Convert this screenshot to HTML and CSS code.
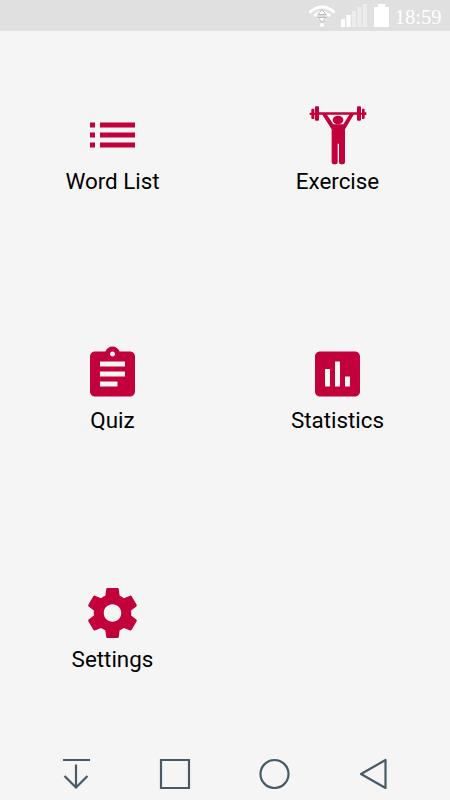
FILE: index.html
```html
<!DOCTYPE html>
<html lang="en">
<head>
<meta charset="utf-8">
<title>Vocabulary</title>
<link rel="stylesheet" href="styles.css">
</head>
<body>
<header class="status">
  <svg class="wifi" width="28" height="24" viewBox="0 0 28 24">
    <path d="M1.500 9.500Q14 -1.500 26.500 9.500M6 13Q14 5.500 22 13" fill="none" stroke="#fff" stroke-width="3"/>
    <path d="M10 16.500Q14 13.500 18 16.500" fill="none" stroke="#fff" stroke-width="2"/>
    <circle cx="14" cy="22" r="2" fill="#fff"/>
    <path d="M14 6.500l4 5h-8zM14 19.500l4-5h-8z" fill="#fff" stroke="#aaa" stroke-width=".8"/>
  </svg>
  <svg class="signal" width="26" height="24" viewBox="0 0 26 24">
    <path d="M0 16h4v8H0zM5.500 12h4v12h-4z" fill="#fff"/>
    <path d="M11 8h4v16h-4zM16.500 4h4v20h-4zM22 1h4v23h-4z" fill="#ececec"/>
  </svg>
  <svg class="battery" width="15" height="24" viewBox="0 0 15 24"><path d="M4 1h7v3h4v20H0V4h4z" fill="#fff"/></svg>
  <span class="clock">18:59</span>
</header>
<main class="menu">
  <a class="item">
    <svg class="icon" viewBox="0 0 24 24"><path d="M3 13h2v-2H3v2zm0 4h2v-2H3v2zm0-8h2V7H3v2zm4 4h14v-2H7v2zm0 4h14v-2H7v2zM7 7v2h14V7H7z"/></svg>
    <span>Word List</span>
  </a>
  <a class="item">
    <svg class="icon" viewBox="52.5 30 180 180">
      <path d="M59 53h5V44q0-3 3-3h6v12h2V37q0-3 3-3h6q3 0 3 3v15h114V37q0-3 3-3h6q3 0 3 3v16h3V41h5q3 0 3 3v8h5v8h-5v9q0 3-3 3h-5V59h-3v15q0 3-3 3h-6q-3 0-3-3V59h-10l-26 44v99q0 6-6 6h-6q-6 0-6-6v-56h-4v56q0 6-6 6h-6q-6 0-6-6v-99L97 59H87v15q0 3-3 3h-6q-3 0-3-3V59h-2v13h-6q-3 0-3-3v-9h-5zM111 59l19 29h30l18-29z"/>
      <ellipse cx="144" cy="75" rx="16" ry="12.500"/>
    </svg>
    <span>Exercise</span>
  </a>
  <a class="item">
    <svg class="icon" viewBox="0 0 24 24"><path d="M19 3h-4.180C14.400 1.840 13.300 1 12 1s-2.400.84-2.820 2H5c-1.100 0-2 .9-2 2v14c0 1.100.9 2 2 2h14c1.100 0 2-.9 2-2V5c0-1.100-.9-2-2-2zm-7 0c.55 0 1 .45 1 1s-.45 1-1 1-1-.45-1-1 .45-1 1-1zm2 14H7v-2h7v2zm3-4H7v-2h10v2zm0-4H7V7h10v2z"/></svg>
    <span>Quiz</span>
  </a>
  <a class="item">
    <svg class="icon" viewBox="0 0 24 24"><path d="M19 3H5c-1.100 0-2 .9-2 2v14c0 1.100.9 2 2 2h14c1.100 0 2-.9 2-2V5c0-1.100-.9-2-2-2zM9 17H7v-7h2v7zm4 0h-2V7h2v10zm4 0h-2v-4h2v4z"/></svg>
    <span>Statistics</span>
  </a>
  <a class="item">
    <svg class="icon" viewBox="0 0 24 24"><path d="M19.430 12.980c.04-.32.07-.64.07-.98s-.03-.66-.07-.98l2.110-1.650c.19-.15.24-.42.12-.64l-2-3.460c-.12-.22-.39-.3-.61-.22l-2.490 1c-.52-.4-1.080-.73-1.690-.98l-.38-2.650C14.460 2.180 14.250 2 14 2h-4c-.25 0-.46.18-.49.42l-.38 2.650c-.61.25-1.170.59-1.690.98l-2.490-1c-.23-.09-.49 0-.61.22l-2 3.460c-.13.22-.07.49.12.64l2.110 1.650c-.04.32-.07.65-.07.98s.03.66.07.98l-2.110 1.650c-.19.15-.24.42-.12.64l2 3.460c.12.22.39.3.61.22l2.490-1c.52.4 1.080.73 1.690.98l.38 2.650c.03.24.24.42.49.42h4c.25 0 .46-.18.49-.42l.38-2.650c.61-.25 1.170-.59 1.690-.98l2.490 1c.23.09.49 0 .61-.22l2-3.460c.12-.22.07-.49-.12-.64l-2.110-1.650zM12 15.500c-1.930 0-3.500-1.570-3.500-3.500s1.570-3.500 3.500-3.500 3.500 1.570 3.500 3.500-1.570 3.500-3.500 3.500z"/></svg>
    <span>Settings</span>
  </a>
</main>
<nav class="nav">
  <svg width="32" height="32" viewBox="0 0 32 32"><path d="M3 3h27M16 7.500V30M4.500 19L16 30.500 27.500 19"/></svg>
  <svg width="32" height="32" viewBox="0 0 32 32"><path d="M2 3h28v28H2z"/></svg>
  <svg width="32" height="32" viewBox="0 0 32 32"><circle cx="15.500" cy="17" r="14"/></svg>
  <svg width="32" height="32" viewBox="0 0 32 32"><path d="M27.500 3v28L3 17z" stroke-linejoin="round"/></svg>
</nav>
</body>
</html>
```
FILE: styles.css
```css
body {
  margin: 0;
  height: 800px;
  display: flex;
  flex-direction: column;
  background: #f5f5f5;
  color: #000;
  font-family: Roboto, sans-serif;
  overflow: hidden;
}
.status {
  height: 31px;
  box-sizing: border-box;
  padding: 3px 8.5px 0 0;
  display: flex;
  justify-content: flex-end;
  background: #e0e0e0;
}
.signal { margin-left: 5px; }
.battery { margin-left: 7px; }
.clock {
  margin-left: 6px;
  font: 20.5px/28px "Liberation Serif", serif;
  color: #fff;
}
.menu {
  display: grid;
  grid-template-columns: 1fr 1fr;
  grid-auto-rows: 239px;
}
.item {
  display: flex;
  flex-direction: column;
  align-items: center;
  padding-top: 74px;
  font-size: 22.4px;
  line-height: 32px;
}
.icon {
  width: 61px;
  height: 60px;
  fill: #c2003b;
}
.nav {
  height: 52px;
  padding: 9px 60px 0 60px;
  box-sizing: border-box;
  display: flex;
  justify-content: space-between;
}
.nav svg {
  fill: none;
  stroke: #485a66;
  stroke-width: 2.2;
}
```
